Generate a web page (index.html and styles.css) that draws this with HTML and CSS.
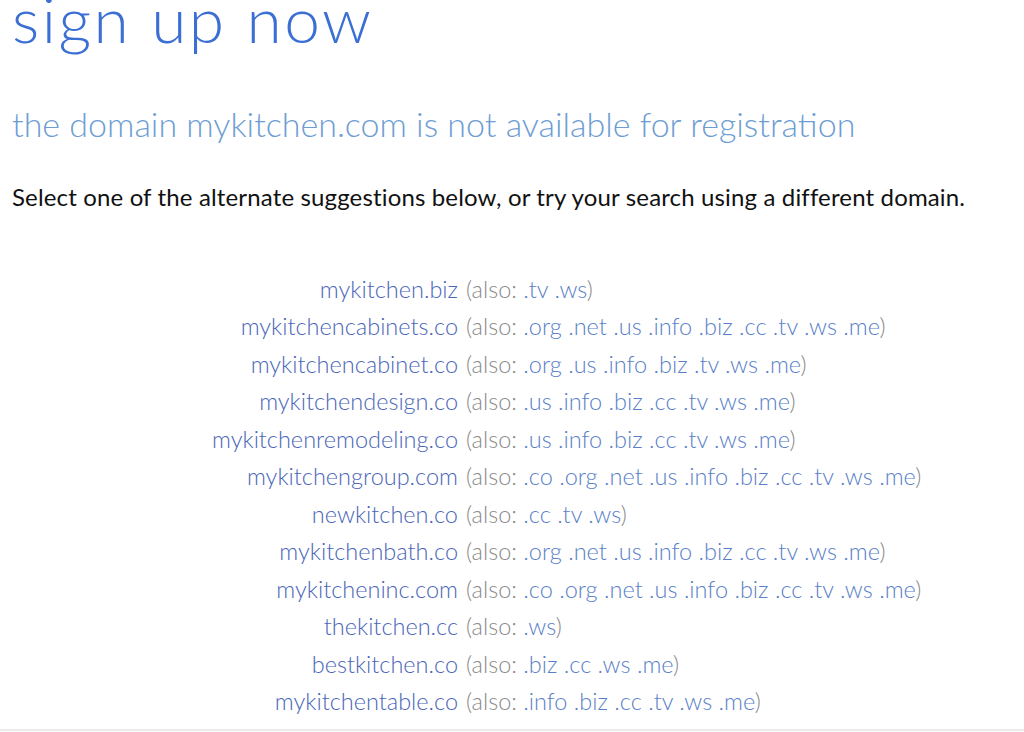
FILE: index.html
```html
<!DOCTYPE html>
<html lang="en">

<head>
    <meta charset="UTF-8">
    <meta name="viewport" content="width=device-width, initial-scale=1.0">
    <title>Sign up now</title>
    <link rel="stylesheet" href="styles.css">
</head>

<body>
    <div class="page">
        <h1 class="title">sign up now</h1>
        <h2 class="notice">the domain mykitchen.com is not available for registration</h2>
        <p class="hint">Select one of the alternate suggestions below, or try your search using a different domain.</p>

        <table class="suggestions">
            <tr><td class="name"><a href="#">mykitchen.biz</a></td><td class="also">(also: <a href="#">.tv</a> <a href="#">.ws</a>)</td></tr>
            <tr><td class="name"><a href="#">mykitchencabinets.co</a></td><td class="also">(also: <a href="#">.org</a> <a href="#">.net</a> <a href="#">.us</a> <a href="#">.info</a> <a href="#">.biz</a> <a href="#">.cc</a> <a href="#">.tv</a> <a href="#">.ws</a> <a href="#">.me</a>)</td></tr>
            <tr><td class="name"><a href="#">mykitchencabinet.co</a></td><td class="also">(also: <a href="#">.org</a> <a href="#">.us</a> <a href="#">.info</a> <a href="#">.biz</a> <a href="#">.tv</a> <a href="#">.ws</a> <a href="#">.me</a>)</td></tr>
            <tr><td class="name"><a href="#">mykitchendesign.co</a></td><td class="also">(also: <a href="#">.us</a> <a href="#">.info</a> <a href="#">.biz</a> <a href="#">.cc</a> <a href="#">.tv</a> <a href="#">.ws</a> <a href="#">.me</a>)</td></tr>
            <tr><td class="name"><a href="#">mykitchenremodeling.co</a></td><td class="also">(also: <a href="#">.us</a> <a href="#">.info</a> <a href="#">.biz</a> <a href="#">.cc</a> <a href="#">.tv</a> <a href="#">.ws</a> <a href="#">.me</a>)</td></tr>
            <tr><td class="name"><a href="#">mykitchengroup.com</a></td><td class="also">(also: <a href="#">.co</a> <a href="#">.org</a> <a href="#">.net</a> <a href="#">.us</a> <a href="#">.info</a> <a href="#">.biz</a> <a href="#">.cc</a> <a href="#">.tv</a> <a href="#">.ws</a> <a href="#">.me</a>)</td></tr>
            <tr><td class="name"><a href="#">newkitchen.co</a></td><td class="also">(also: <a href="#">.cc</a> <a href="#">.tv</a> <a href="#">.ws</a>)</td></tr>
            <tr><td class="name"><a href="#">mykitchenbath.co</a></td><td class="also">(also: <a href="#">.org</a> <a href="#">.net</a> <a href="#">.us</a> <a href="#">.info</a> <a href="#">.biz</a> <a href="#">.cc</a> <a href="#">.tv</a> <a href="#">.ws</a> <a href="#">.me</a>)</td></tr>
            <tr><td class="name"><a href="#">mykitcheninc.com</a></td><td class="also">(also: <a href="#">.co</a> <a href="#">.org</a> <a href="#">.net</a> <a href="#">.us</a> <a href="#">.info</a> <a href="#">.biz</a> <a href="#">.cc</a> <a href="#">.tv</a> <a href="#">.ws</a> <a href="#">.me</a>)</td></tr>
            <tr><td class="name"><a href="#">thekitchen.cc</a></td><td class="also">(also: <a href="#">.ws</a>)</td></tr>
            <tr><td class="name"><a href="#">bestkitchen.co</a></td><td class="also">(also: <a href="#">.biz</a> <a href="#">.cc</a> <a href="#">.ws</a> <a href="#">.me</a>)</td></tr>
            <tr><td class="name"><a href="#">mykitchentable.co</a></td><td class="also">(also: <a href="#">.info</a> <a href="#">.biz</a> <a href="#">.cc</a> <a href="#">.tv</a> <a href="#">.ws</a> <a href="#">.me</a>)</td></tr>
        </table>
    </div>
    <div class="footer-line"></div>
</body>

</html>
```

FILE: styles.css
```css
body {
    margin: 0;
    background-color: #fff;
    font-family: Lato, "Open Sans", sans-serif;
    font-weight: 300;
    height: 732px;
    overflow: hidden;
    position: relative;
}

.page {
    padding: 0 12px;
}

.title {
    margin: -17px 0 0;
    font-size: 64px;
    font-weight: 300;
    line-height: 72px;
    color: #3b6fd4;
    letter-spacing: 2.5px;
}

.notice {
    margin: 49px 0 0;
    font-size: 34px;
    font-weight: 300;
    line-height: 40px;
    color: #6d9dd3;
}

.hint {
    margin: 39px 0 0;
    font-size: 24px;
    font-weight: 400;
    line-height: 28px;
    color: #111;
    letter-spacing: 0.15px;
}

.suggestions {
    margin: 59px 0 0;
    border-collapse: collapse;
    font-size: 23.5px;
}

.suggestions td {
    padding: 0;
    height: 37.5px;
    white-space: nowrap;
}

.suggestions .name {
    width: 446px;
    text-align: right;
    padding-right: 8px;
}

.suggestions .also {
    color: #8a8a8a;
}

.suggestions a {
    color: #4a66b8;
    text-decoration: none;
}

.suggestions .also a {
    color: #5a7fc8;
}

.footer-line {
    position: absolute;
    left: 0;
    right: 0;
    bottom: 1px;
    height: 2px;
    background-color: #ebebeb;
}
```
